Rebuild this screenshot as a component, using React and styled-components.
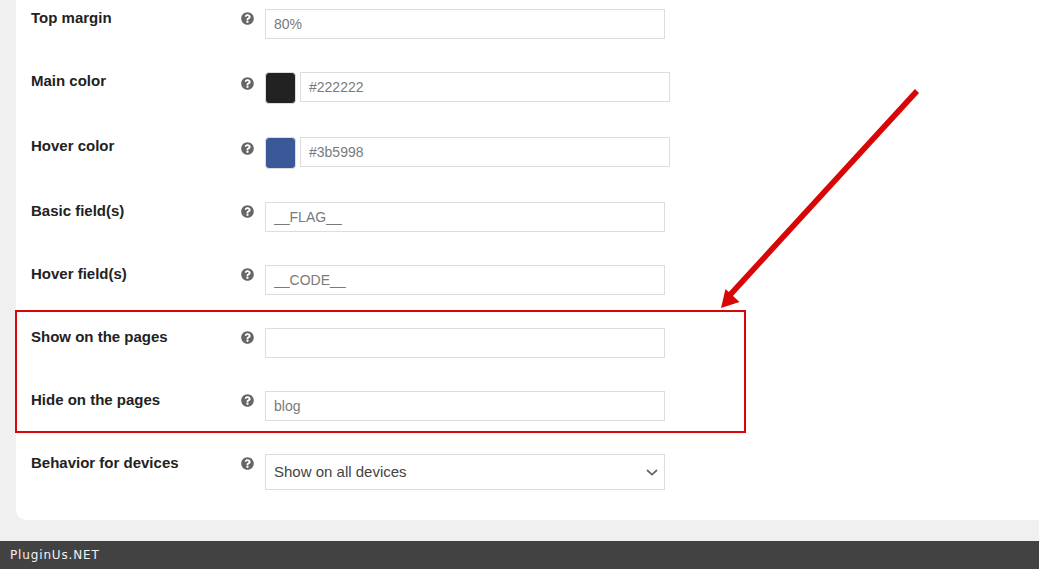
import React from 'react';
import styled, { createGlobalStyle } from 'styled-components';
import { FaQuestionCircle } from 'react-icons/fa';

const GlobalStyle = createGlobalStyle`
  html, body {
    margin: 0;
    height: 100%;
    overflow: hidden;
    background-color: #f0f0f0;
    font-family: "Liberation Sans", Arial, sans-serif;
  }
`;

const Page = styled.div`
  position: relative;
  display: flex;
  flex-direction: column;
  height: 569px;
  overflow: hidden;
`;

const Main = styled.main`
  flex: 1;
  padding-left: 16px;
`;

const Card = styled.div`
  display: flex;
  flex-direction: column;
  gap: 33px;
  padding: 9px 0 30px 15px;
  background-color: #fff;
  border-bottom-left-radius: 10px;
`;

const Row = styled.div`
  display: flex;
  align-items: flex-start;
`;

const Label = styled.div`
  width: 210px;
  padding-top: 1px;
  font-size: 15px;
  line-height: 16px;
  font-weight: 700;
  color: #222;
`;

const Hint = styled.div`
  display: flex;
  width: 24px;
  padding-top: ${(p) => (p.$swatch ? '5px' : '3px')};
  color: #666;
  font-size: 13px;
`;

const Input = styled.input`
  box-sizing: border-box;
  width: ${(p) => (p.$short ? '370px' : '400px')};
  height: 30px;
  padding: 0 8px;
  border: 1px solid #ddd;
  background-color: #fff;
  font-family: inherit;
  font-size: 14px;
  color: #7a7a7a;
  outline: none;
`;

const ColorField = styled.div`
  display: flex;
  gap: 4px;
`;

const Swatch = styled.div`
  box-sizing: border-box;
  width: 31px;
  height: 32px;
  border: 1px solid #ddd;
  border-radius: 4px;
  background-color: ${(p) => p.$color};
`;

const SelectWrap = styled.div`
  position: relative;
  width: 400px;
  height: 36px;
`;

const Select = styled.select`
  box-sizing: border-box;
  width: 100%;
  height: 100%;
  padding: 0 8px 2px;
  appearance: none;
  border: 1px solid #ddd;
  border-radius: 0;
  background-color: #fff;
  font-family: inherit;
  font-size: 15px;
  color: #444;
  outline: none;
`;

const Chevron = styled.svg`
  position: absolute;
  top: 15px;
  right: 7px;
  width: 12px;
  height: 8px;
  pointer-events: none;
`;

const Footer = styled.footer`
  flex: none;
  height: 28px;
  padding-left: 10px;
  background-color: #424242;
  color: #f2f2f2;
  font-family: "DejaVu Sans", sans-serif;
  font-size: 12px;
  line-height: 28px;
  letter-spacing: 0.85px;
`;

const Highlight = styled.div`
  position: absolute;
  top: 310px;
  left: 15px;
  box-sizing: border-box;
  width: 731px;
  height: 123px;
  border: 2px solid #d80606;
  pointer-events: none;
`;

const Arrow = styled.svg`
  position: absolute;
  top: 80px;
  left: 710px;
  width: 220px;
  height: 240px;
  pointer-events: none;
`;

const Hinted = ({ label, swatch }) => (
  <>
    <Label>{label}</Label>
    <Hint $swatch={swatch}>
      <FaQuestionCircle />
    </Hint>
  </>
);

const TextRow = ({ label, value }) => (
  <Row>
    <Hinted label={label} />
    <Input defaultValue={value} />
  </Row>
);

const ColorRow = ({ label, color }) => (
  <Row>
    <Hinted label={label} swatch />
    <ColorField>
      <Swatch $color={color} />
      <Input $short defaultValue={color} />
    </ColorField>
  </Row>
);

export default function App() {
  return (
    <Page>
      <GlobalStyle />
      <Main>
        <Card>
          <TextRow label="Top margin" value="80%" />
          <ColorRow label="Main color" color="#222222" />
          <ColorRow label="Hover color" color="#3b5998" />
          <TextRow label="Basic field(s)" value="__FLAG__" />
          <TextRow label="Hover field(s)" value="__CODE__" />
          <TextRow label="Show on the pages" value="" />
          <TextRow label="Hide on the pages" value="blog" />
          <Row>
            <Hinted label="Behavior for devices" />
            <SelectWrap>
              <Select defaultValue="all">
                <option value="all">Show on all devices</option>
              </Select>
              <Chevron viewBox="0 0 12 8" fill="none" stroke="#666" strokeWidth="1.7">
                <path d="M1 1 L6 5.6 L11 1" />
              </Chevron>
            </SelectWrap>
          </Row>
        </Card>
      </Main>
      <Footer>PluginUs.NET</Footer>
      <Highlight />
      <Arrow viewBox="710 80 220 240">
        <path d="M917 91 L729 296" stroke="#d80606" strokeWidth="5.6" fill="none" />
        <path d="M721 308 L725.5 289 L739.5 302 Z" fill="#d80606" />
      </Arrow>
    </Page>
  );
}
